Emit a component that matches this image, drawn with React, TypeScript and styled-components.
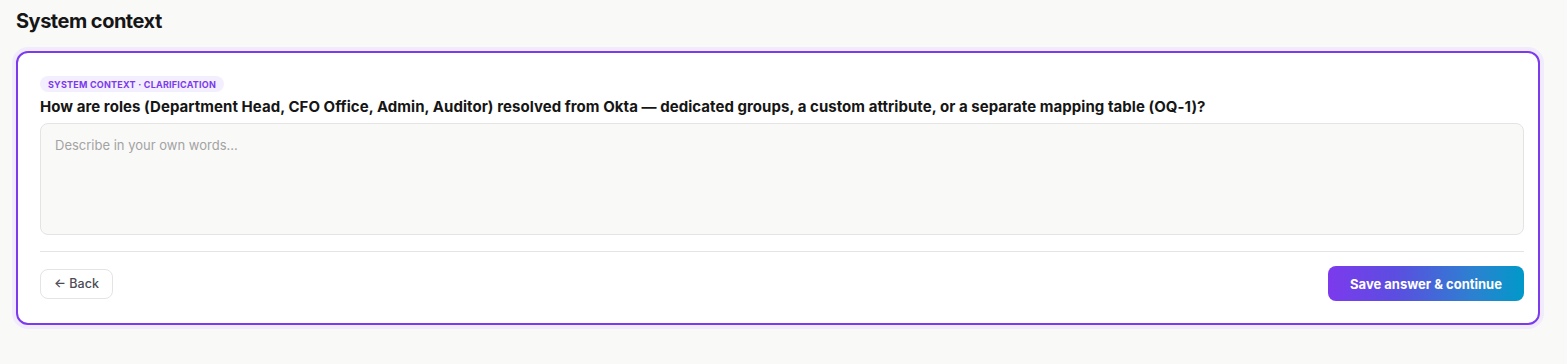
import React from "react";
import styled, { createGlobalStyle } from "styled-components";

const Global = createGlobalStyle`
  html, body { margin: 0; padding: 0; background: #f9f9f8; }
  body { font-family: Inter, "Noto Sans", sans-serif; color: #161616; -webkit-font-smoothing: antialiased; }
  * { box-sizing: border-box; }
`;

const Page = styled.div`
  padding: 7px 16px 40px 16px;
  width: 1567px;
`;

const Title = styled.h2`
  margin: 0 0 16px 0;
  font-size: 20px;
  line-height: 28px;
  font-weight: 700;
  letter-spacing: -0.5px;
  color: #161616;
`;

const Card = styled.section`
  width: 1524px;
  background: #ffffff;
  border: 2px solid #7c3aed;
  border-radius: 12px;
  box-shadow: 0 0 0 4px #f1ebfd;
  padding: 23px 14px 22px 22px;
  display: flex;
  flex-direction: column;
`;

const Badge = styled.span`
  align-self: flex-start;
  display: inline-flex;
  align-items: center;
  height: 16px;
  padding: 0 8px;
  border-radius: 999px;
  background: #f3effe;
  color: #7c3aed;
  font-size: 9px;
  font-weight: 700;
  letter-spacing: 0.23px;
  text-transform: uppercase;
`;

const Question = styled.p`
  margin: 5px 0 6px 0;
  font-size: 15px;
  line-height: 20px;
  font-weight: 700;
  letter-spacing: 0.05px;
  color: #161616;
`;

const Answer = styled.textarea`
  width: 1484px;
  height: 112px;
  resize: none;
  background: #f9f9f8;
  border: 1px solid #e4e4e4;
  border-radius: 8px;
  padding: 12px 14px;
  font-family: inherit;
  font-size: 13px;
  line-height: 18px;
  color: #161616;
  outline: none;
  &::placeholder { color: #a3a3a3; }
`;

const Divider = styled.hr`
  width: 1484px;
  margin: 16px 0 0 0;
  border: 0;
  border-top: 1px solid #e4e4e4;
`;

const Footer = styled.div`
  width: 1484px;
  margin-top: 14px;
  display: flex;
  align-items: center;
  justify-content: space-between;
`;

const GhostButton = styled.button`
  height: 30px;
  width: 73px;
  padding: 0;
  border: 1px solid #e4e4e4;
  border-radius: 8px;
  background: #ffffff;
  color: #4b4b55;
  font-family: inherit;
  font-size: 12.5px;
  font-weight: 500;
  cursor: pointer;
`;

const PrimaryButton = styled.button`
  height: 35px;
  width: 196px;
  border: 0;
  border-radius: 8px;
  background: linear-gradient(90deg, #7c3aed 0%, #5b4ee0 35%, #2b82d0 75%, #0099c9 100%);
  color: #ffffff;
  font-family: inherit;
  font-size: 13px;
  font-weight: 700;
  cursor: pointer;
`;

export default function App() {
  return (
    <Page>
      <Global />
      <Title>System context</Title>
      <Card>
        <Badge>System context · Clarification</Badge>
        <Question>
          How are roles (Department Head, CFO Office, Admin, Auditor) resolved from Okta — dedicated groups, a custom attribute, or a separate mapping table (OQ-1)?
        </Question>
        <Answer placeholder="Describe in your own words…" />
        <Divider />
        <Footer>
          <GhostButton>← Back</GhostButton>
          <PrimaryButton>Save answer &amp; continue</PrimaryButton>
        </Footer>
      </Card>
    </Page>
  );
}
